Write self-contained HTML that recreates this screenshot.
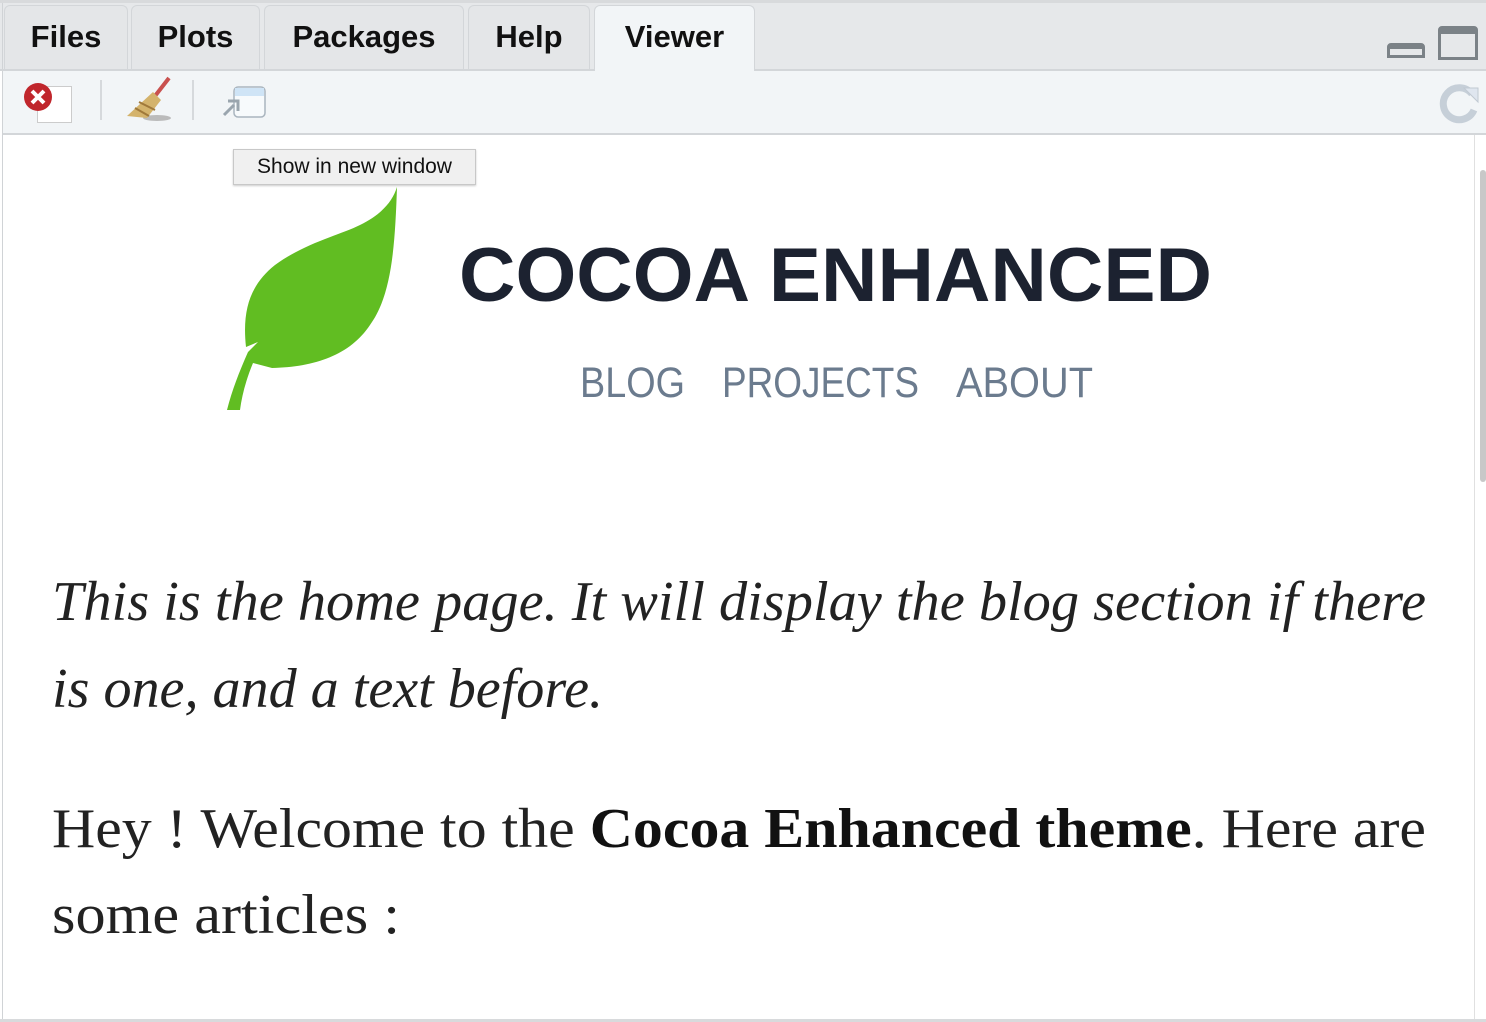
<!DOCTYPE html>
<html><head><meta charset="utf-8"><style>
body{margin:0;width:1486px;height:1022px;overflow:hidden;background:#fff;font-family:"Liberation Sans",sans-serif;position:relative}
.a{position:absolute}
.tab{position:absolute;top:5px;height:65px;background:#e4e6e8;border:1px solid #d3d6d9;border-bottom:none;border-radius:6px 6px 0 0;box-sizing:border-box;font-weight:bold;font-size:31px;color:#111;text-align:center;line-height:62px}
</style></head><body>
<div class="a" style="left:0;top:0;width:1486px;height:70px;background:#e6e8ea;border-top:3px solid #d8dadc;box-sizing:border-box"></div>
<div class="a" style="left:2px;top:3px;width:1px;height:1019px;background:#d0d3d6"></div>
<div class="tab" style="left:4px;width:124px">Files</div>
<div class="tab" style="left:131px;width:129px">Plots</div>
<div class="tab" style="left:264px;width:200px">Packages</div>
<div class="tab" style="left:468px;width:122px">Help</div>
<div class="tab" style="left:594px;width:161px;background:#f2f5f7;height:67px">Viewer</div>
<div class="a" style="left:0;top:69px;width:594px;height:2px;background:#d3d6d9"></div>
<div class="a" style="left:755px;top:69px;width:731px;height:2px;background:#d3d6d9"></div>
<div class="a" style="left:3px;top:71px;width:1483px;height:62px;background:#f2f5f7;border-bottom:2px solid #d3d6d9"></div>
<div class="a" style="left:1387px;top:43px;width:38px;height:15px;border:3px solid #7b8287;border-top-width:6px;border-radius:4px 4px 0 0;box-sizing:border-box"></div>
<div class="a" style="left:1438px;top:26px;width:40px;height:34px;border:3px solid #7b8287;border-top-width:8px;border-radius:4px 4px 0 0;box-sizing:border-box"></div>
<div class="a" style="left:37px;top:86px;width:33px;height:35px;background:#fff;border:1px solid #ccc"></div>
<svg class="a" style="left:22px;top:81px" width="32" height="32"><circle cx="16" cy="16" r="14" fill="#c0262c"/><path d="M10 10L22 22M22 10L10 22" stroke="#fff" stroke-width="4"/></svg>
<div class="a" style="left:100px;top:80px;width:2px;height:40px;background:#d6d9dc"></div>
<div class="a" style="left:192px;top:80px;width:2px;height:40px;background:#d6d9dc"></div>
<svg class="a" style="left:125px;top:76px" width="50" height="46"><ellipse cx="32" cy="42" rx="14" ry="3" fill="#bbb"/><path d="M44 2L30 20" stroke="#c9514f" stroke-width="4"/><path d="M28 16L36 24L22 42L2 40Z" fill="#d4b36c"/><path d="M14 26L30 34M10 32L24 40" stroke="#a0793a" stroke-width="2"/></svg>
<svg class="a" style="left:222px;top:85px" width="46" height="34"><rect x="12" y="2" width="31" height="30" rx="4" fill="#f7fafc" stroke="#aab5bf" stroke-width="1.5"/><rect x="13" y="3" width="29" height="8" fill="#cfe4f6"/><path d="M2 30L12 20M6 16H16V26" stroke="#9aa5ae" stroke-width="3" fill="none"/></svg>
<svg class="a" style="left:1438px;top:80px" width="44" height="44"><path d="M34 14A16 16 0 1 0 36 30" stroke="#c6cfd8" stroke-width="7" fill="none"/><path d="M26 8L40 8L40 22Z" fill="#dfe6ef" stroke="#c0c9d2"/></svg>
<div class="a" style="left:1474px;top:135px;width:1px;height:887px;background:#e0e0e0"></div>
<div class="a" style="left:1480px;top:170px;width:6px;height:312px;background:#c8c8c8;border-radius:3px"></div>
<div class="a" style="left:0;top:1019px;width:1486px;height:3px;background:#d8dadc"></div>
<svg class="a" style="left:220px;top:185px" width="185" height="230"><path d="M177 2C175 60 172 110 150 140C130 170 95 182 52 183L33 178C26 195 22 210 20 225L7 225C12 205 20 185 28 167L38 157L26 162C22 125 30 100 55 80C85 58 120 50 140 40C160 30 172 18 177 2Z" fill="#61bd22"/></svg>
<svg class="a" style="left:0;top:0" width="1486" height="1022">
<text x="459" y="301" font-family="Liberation Sans" font-weight="bold" font-size="76" fill="#1c2230" textLength="753" lengthAdjust="spacingAndGlyphs">COCOA ENHANCED</text>
<text x="580" y="397" font-family="Liberation Sans" font-size="43" fill="#6b7b8e" textLength="105" lengthAdjust="spacingAndGlyphs">BLOG</text>
<text x="722" y="397" font-family="Liberation Sans" font-size="43" fill="#6b7b8e" textLength="197" lengthAdjust="spacingAndGlyphs">PROJECTS</text>
<text x="956" y="397" font-family="Liberation Sans" font-size="43" fill="#6b7b8e" textLength="137" lengthAdjust="spacingAndGlyphs">ABOUT</text>
<g font-family="Liberation Serif" font-size="56" fill="#222">
<text x="52" y="620" font-style="italic" textLength="1374" lengthAdjust="spacingAndGlyphs">This is the home page. It will display the blog section if there</text>
<text x="52" y="707" font-style="italic" textLength="551" lengthAdjust="spacingAndGlyphs">is one, and a text before.</text>
<text x="52" y="847" textLength="1374" lengthAdjust="spacingAndGlyphs">Hey ! Welcome to the <tspan font-weight="bold" fill="#111">Cocoa Enhanced theme</tspan>. Here are</text>
<text x="52" y="933" textLength="348" lengthAdjust="spacingAndGlyphs">some articles :</text>
</g>
</svg>
<div class="a" style="left:233px;top:149px;width:243px;height:36px;background:#f0f0f0;border:1px solid #c8c8c8;box-sizing:border-box;box-shadow:0 1px 2px rgba(0,0,0,.2);font-size:21px;line-height:34px;text-align:center;color:#111">Show in new window</div>
</body></html>
